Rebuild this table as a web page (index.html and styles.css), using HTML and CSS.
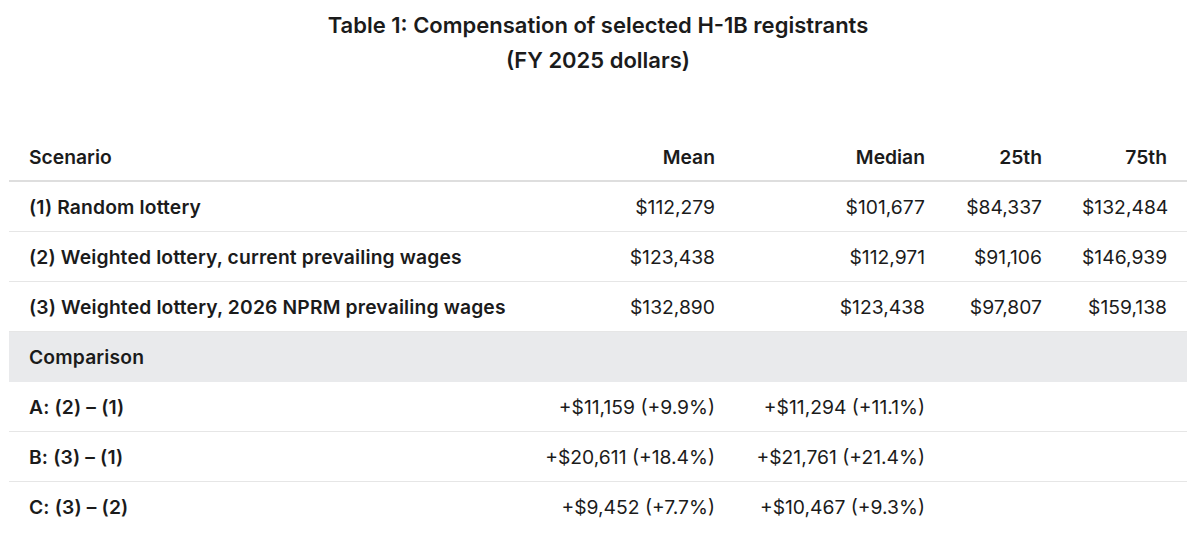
FILE: index.html
```html
<!DOCTYPE html>
<html lang="en">
<head>
<meta charset="utf-8">
<title>Table 1</title>
<link rel="stylesheet" href="styles.css">
</head>
<body>
<div class="page">
  <h1 class="title">Table 1: Compensation of selected H-1B registrants<br>(FY 2025 dollars)</h1>
  <table class="data">
    <colgroup>
      <col class="c-label"><col class="c-mean"><col class="c-median"><col class="c-p25"><col class="c-p75">
    </colgroup>
    <thead>
      <tr>
        <th class="lbl">Scenario</th>
        <th class="num">Mean</th>
        <th class="num">Median</th>
        <th class="num">25th</th>
        <th class="num">75th</th>
      </tr>
    </thead>
    <tbody>
      <tr>
        <td class="lbl">(1) Random lottery</td>
        <td class="num">$112,279</td>
        <td class="num">$101,677</td>
        <td class="num">$84,337</td>
        <td class="num">$132,484</td>
      </tr>
      <tr>
        <td class="lbl">(2) Weighted lottery, current prevailing wages</td>
        <td class="num">$123,438</td>
        <td class="num">$112,971</td>
        <td class="num">$91,106</td>
        <td class="num">$146,939</td>
      </tr>
      <tr>
        <td class="lbl">(3) Weighted lottery, 2026 NPRM prevailing wages</td>
        <td class="num">$132,890</td>
        <td class="num">$123,438</td>
        <td class="num">$97,807</td>
        <td class="num">$159,138</td>
      </tr>
      <tr class="section">
        <td class="lbl" colspan="5">Comparison</td>
      </tr>
      <tr>
        <td class="lbl">A: (2) – (1)</td>
        <td class="num">+$11,159 (+9.9%)</td>
        <td class="num">+$11,294 (+11.1%)</td>
        <td class="num"></td>
        <td class="num"></td>
      </tr>
      <tr>
        <td class="lbl">B: (3) – (1)</td>
        <td class="num">+$20,611 (+18.4%)</td>
        <td class="num">+$21,761 (+21.4%)</td>
        <td class="num"></td>
        <td class="num"></td>
      </tr>
      <tr class="last">
        <td class="lbl">C: (3) – (2)</td>
        <td class="num">+$9,452 (+7.7%)</td>
        <td class="num">+$10,467 (+9.3%)</td>
        <td class="num"></td>
        <td class="num"></td>
      </tr>
    </tbody>
  </table>
</div>
</body>
</html>
```
FILE: styles.css
```css
html, body {
  margin: 0;
  padding: 0;
  background: #ffffff;
}
body {
  font-family: Inter, "Noto Sans", "Liberation Sans", sans-serif;
  color: #1b1b1b;
}
.page {
  padding: 8px 13px 0 9px;
}
.title {
  margin: 0;
  text-align: center;
  font-size: 22px;
  font-weight: 600;
  line-height: 35px;
  color: #1b1b1b;
}
.data {
  margin-top: 54px;
  width: 1178px;
  border-collapse: collapse;
  table-layout: fixed;
  font-size: 19.3px;
}
.c-label { width: 516px; }
.c-mean { width: 210px; }
.c-median { width: 210px; }
.c-p25 { width: 117px; }
.c-p75 { width: 125px; }
.data th, .data td {
  padding: 0 20px;
  height: 49px;
  line-height: 24px;
  white-space: nowrap;
  border-bottom: 1px solid #e6e6e6;
}
.data th {
  height: 46px;
  padding-top: 2px;
  font-weight: 600;
  border-bottom: 2px solid #dedede;
}
.data .lbl { text-align: left; font-weight: 600; }
.data td.lbl { letter-spacing: 0.15px; }
.data .num { text-align: right; font-weight: 400; }
.data th.num { font-weight: 600; }
.section td {
  background: #e9eaec;
  border-bottom: 1px solid #e9eaec;
}
.last td { border-bottom: none; }
```
